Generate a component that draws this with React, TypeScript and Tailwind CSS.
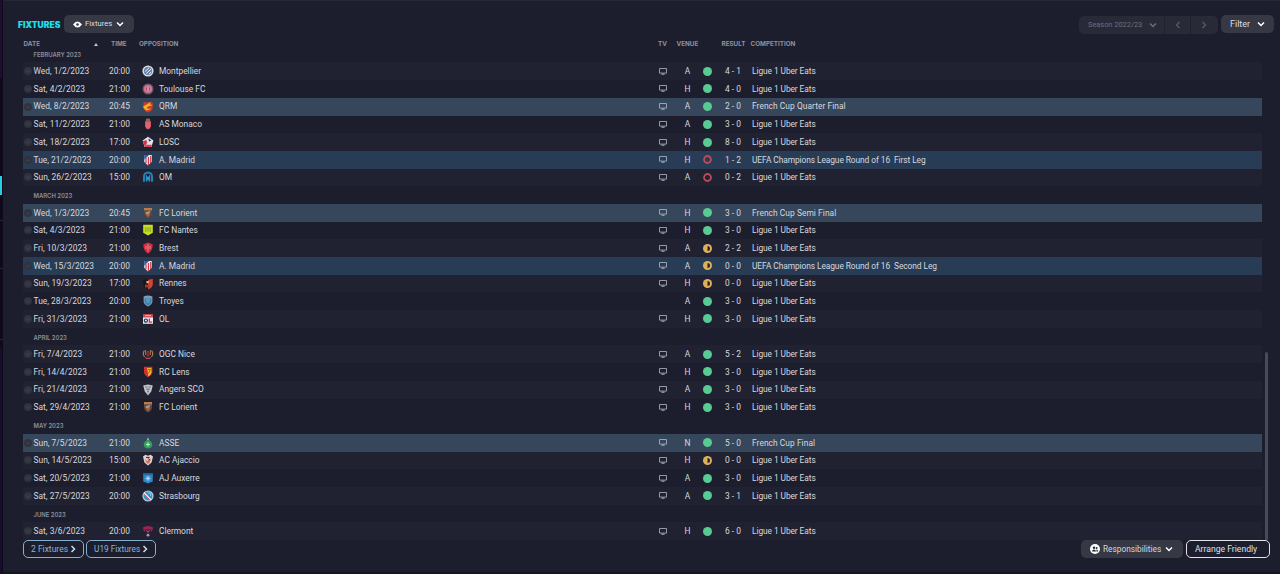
import type { ReactNode } from "react";
import clsx from "clsx";

type Outcome = "win" | "draw" | "loss";
type Kind = "league" | "cup" | "europe";

interface Fixture {
  date: string;
  time: string;
  club: string;
  tv: boolean;
  venue: "H" | "A" | "N";
  outcome: Outcome;
  result: string;
  competition: string;
  kind: Kind;
}

const LEAGUE = "Ligue 1 Uber Eats";

function fx(date: string, time: string, club: string, venue: "H" | "A" | "N", outcome: Outcome, result: string, competition = LEAGUE, kind: Kind = "league", tv = true): Fixture {
  return { date, time, club, tv, venue, outcome, result, competition, kind };
}

const rows: (string | Fixture)[] = [
  "February 2023",
  fx("Wed, 1/2/2023", "20:00", "Montpellier", "A", "win", "4 - 1"),
  fx("Sat, 4/2/2023", "21:00", "Toulouse FC", "H", "win", "4 - 0"),
  fx("Wed, 8/2/2023", "20:45", "QRM", "A", "win", "2 - 0", "French Cup Quarter Final", "cup"),
  fx("Sat, 11/2/2023", "21:00", "AS Monaco", "A", "win", "3 - 0"),
  fx("Sat, 18/2/2023", "17:00", "LOSC", "H", "win", "8 - 0"),
  fx("Tue, 21/2/2023", "20:00", "A. Madrid", "H", "loss", "1 - 2", "UEFA Champions League Round of 16  First Leg", "europe"),
  fx("Sun, 26/2/2023", "15:00", "OM", "A", "loss", "0 - 2"),
  "March 2023",
  fx("Wed, 1/3/2023", "20:45", "FC Lorient", "H", "win", "3 - 0", "French Cup Semi Final", "cup"),
  fx("Sat, 4/3/2023", "21:00", "FC Nantes", "H", "win", "3 - 0"),
  fx("Fri, 10/3/2023", "21:00", "Brest", "A", "draw", "2 - 2"),
  fx("Wed, 15/3/2023", "20:00", "A. Madrid", "A", "draw", "0 - 0", "UEFA Champions League Round of 16  Second Leg", "europe"),
  fx("Sun, 19/3/2023", "17:00", "Rennes", "H", "draw", "0 - 0"),
  fx("Tue, 28/3/2023", "20:00", "Troyes", "A", "win", "3 - 0", LEAGUE, "league", false),
  fx("Fri, 31/3/2023", "21:00", "OL", "H", "win", "3 - 0"),
  "April 2023",
  fx("Fri, 7/4/2023", "21:00", "OGC Nice", "A", "win", "5 - 2"),
  fx("Fri, 14/4/2023", "21:00", "RC Lens", "H", "win", "3 - 0"),
  fx("Fri, 21/4/2023", "21:00", "Angers SCO", "A", "win", "3 - 0"),
  fx("Sat, 29/4/2023", "21:00", "FC Lorient", "H", "win", "3 - 0"),
  "May 2023",
  fx("Sun, 7/5/2023", "21:00", "ASSE", "N", "win", "5 - 0", "French Cup Final", "cup"),
  fx("Sun, 14/5/2023", "15:00", "AC Ajaccio", "H", "draw", "0 - 0"),
  fx("Sat, 20/5/2023", "21:00", "AJ Auxerre", "A", "win", "3 - 0"),
  fx("Sat, 27/5/2023", "20:00", "Strasbourg", "A", "win", "3 - 1"),
  "June 2023",
  fx("Sat, 3/6/2023", "20:00", "Clermont", "H", "win", "6 - 0"),
];

const SHIELD = "M2 1h8v5.5Q10 9.5 6 11.5Q2 9.5 2 6.5Z";

const crests: Record<string, ReactNode> = {
  Montpellier: (
    <>
      <circle cx="6" cy="6" r="5.6" fill="#d9dce3" />
      <circle cx="6" cy="6" r="4.1" fill="#5b83b5" />
      <path d="M3 6.5l4-3.6M4.2 8.6l4.8-4.4M7 9l2.2-2" stroke="#f0e7e4" strokeWidth="1" />
      <path d="M3.6 7.6l4.6-4.2" stroke="#d8654a" strokeWidth=".9" />
    </>
  ),
  "Toulouse FC": (
    <>
      <circle cx="6" cy="6" r="5.5" fill="#6f5676" />
      <circle cx="6" cy="6" r="4.1" fill="#cf7790" />
      <circle cx="6" cy="6" r="2" fill="#b03f60" />
      <path d="M5 5h2M6 4.2v3.6M5 7h2" stroke="#f1ccd5" strokeWidth=".7" />
    </>
  ),
  QRM: (
    <>
      <path d="M1.4 1.2h9.2v6.6Q9.4 10.8 6 11.4Q2.6 10.8 1.4 7.8Z" fill="#d23c22" />
      <path d="M1 5.4L5 3.6l3.6-2.8L7.8 3.4 11.2 4 6 5.6 4.4 7.3 9.4 8 4.4 9.5 2 7.2Z" fill="#f3b32c" />
    </>
  ),
  "AS Monaco": (
    <>
      <path d="M3 3.2h6v5Q8.4 10.4 6 11.6Q3.6 10.4 3 8.2Z" fill="#d8505f" />
      <path d="M5 3.4v7M7 3.4v7" stroke="#ee8a90" strokeWidth=".7" />
      <path d="M3.7 3.2L4 1l2-.7L8 1l.3 2.2Z" fill="#8a6d4e" />
    </>
  ),
  LOSC: (
    <>
      <path d="M6 .8l5.4 3.8-2 6.4H2.6l-2-6.4Z" fill="#e6e2ea" />
      <path d="M.8 5.2L4.4 4l.8 2.6L3 11Z" fill="#d5344a" />
      <path d="M6.4 2.4L9.4 4.6 7 5.4Z" fill="#283763" />
      <path d="M3.2 8.8h6.6l-.6 2.2H3Z" fill="#d84456" />
    </>
  ),
  "A. Madrid": (
    <>
      <path d="M2.2 1h7.6v6.8L6 11.6 2.2 7.8Z" fill="#eceaf0" />
      <path d="M4 4v5M6.4 3v8M8.7 2v7" stroke="#ce3646" strokeWidth="1.1" />
      <path d="M2.2 1h4.8L2.2 5.8Z" fill="#3a5c9c" />
    </>
  ),
  OM: (
    <>
      <path d="M2 10.8V5.2Q2.3 1.6 6 1.4Q9.7 1.6 10 5.2v5.6" fill="none" stroke="#2380b6" strokeWidth="2" />
      <path d="M4.6 10.4V5.6L6 7.6l1.4-2v4.8" fill="none" stroke="#2c93ca" strokeWidth="1.5" />
    </>
  ),
  "FC Lorient": (
    <>
      <path d={SHIELD} fill="#554742" />
      <path d="M2 1h8v2.4H2Z" fill="#b77c4a" />
      <path d="M3.2 5.2l5.4-1.4L7.2 7 4.4 8Z" fill="#a3988a" />
      <path d="M4 7.6Q6 6.4 8.4 7.6L6 10.4Z" fill="#c2583b" />
    </>
  ),
  "FC Nantes": (
    <>
      <path d="M1.2.8h9.6v8L6 11.4 1.2 8.8Z" fill="#c8de22" />
      <path d="M3.4 3v5M5 8V3.4l2 4V3M8.6 3v5" fill="none" stroke="#7f9d2c" strokeWidth=".7" />
    </>
  ),
  Brest: (
    <>
      <path d="M6 .5l4.7 1.8Q10.8 9 6 11.7Q1.2 9 1.3 2.3Z" fill="#d62b3d" />
      <path d="M6 2.2v7M4 4v3M8 4v3" stroke="#f0b0b5" strokeWidth=".7" />
    </>
  ),
  Rennes: (
    <>
      <path d="M1.4 1.2L6 2v9.6Q2 9.6 1.4 7Z" fill="#17151b" />
      <path d="M6 2l4.8-1.2V7Q10 9.8 6 11.6Z" fill="#d4452f" />
      <path d="M4.4 3h2.2v2.2H4.4Z" fill="#d9b8a0" />
      <path d="M3 6.6h4.4v2.8H3Z" fill="#a63a2a" />
    </>
  ),
  Troyes: (
    <>
      <path d="M1.6 1.4Q6-.2 10.4 1.4v5.4Q9.8 9.8 6 11.6Q2.2 9.8 1.6 6.8Z" fill="#7f9db3" />
      <path d="M2.6 3.4h6.8v3.2Q9 9 6 10.4Q3 9 2.6 6.6Z" fill="#367fb8" />
      <path d="M4 5h4M4.4 7h3" stroke="#85c1e3" strokeWidth=".8" />
    </>
  ),
  OL: (
    <>
      <path d="M1 1h10v4H1Z" fill="#c3454e" />
      <path d="M1 4.4h10v6.4H1Z" fill="#e8e9ef" />
      <circle cx="3.9" cy="7.6" r="1.6" fill="none" stroke="#26355f" strokeWidth="1.2" />
      <path d="M7.4 5.4v3.8h2.8" fill="none" stroke="#c7333f" strokeWidth="1.3" />
      <path d="M3 2h6v1.2H3Z" fill="#e7a3a6" />
    </>
  ),
  "OGC Nice": (
    <>
      <path d="M2.4 2.6Q0 6 2.6 9M9.6 2.6Q12 6 9.4 9" fill="none" stroke="#a98556" strokeWidth="1.1" />
      <path d="M3.6 2v5M8.4 2v5M6 3v5.5" stroke="#b7854f" strokeWidth=".9" />
      <path d="M4.4 4h3.2v3.6H4.4Z" fill="#7c2e34" />
      <path d="M3 8.8Q6 11 9 8.8L8 11H4Z" fill="#c0464c" />
    </>
  ),
  "RC Lens": (
    <>
      <path d="M2 .8h8.4v6Q9.6 9.8 6 11.6Q2.6 9.8 2 6.8Z" fill="#d3312c" />
      <path d="M5.2 2h4.2v4.6Q8.8 8.8 6.4 10.2Z" fill="#f1c330" />
      <path d="M6 3.4h2.4L6.4 7.6" fill="none" stroke="#b2342a" strokeWidth=".8" />
    </>
  ),
  "Angers SCO": (
    <>
      <path d="M1.2 1.6L6 .5l4.8 1.1-1.6 6L6 11.6 2.8 7.6Z" fill="#c3c5cb" />
      <path d="M3 3h2M7 3h2M4 5.2h4M5 7.4h2" stroke="#5d5f69" strokeWidth=".8" />
      <path d="M6 2v8" stroke="#7d8089" strokeWidth=".6" />
    </>
  ),
  ASSE: (
    <>
      <path d="M6 .2l.8 2.4L6 4l-.8-1.4Z" fill="#b9d8c2" />
      <path d="M6 2.6Q10.6 5 10.2 8.2Q9.4 11.4 6 11.6Q2.6 11.4 1.8 8.2Q1.4 5 6 2.6Z" fill="#2ea25c" />
      <path d="M4 7.4h4M6 5.4v4" stroke="#c7efd3" strokeWidth="1" />
    </>
  ),
  "AC Ajaccio": (
    <>
      <path d="M1 2.6L3.4.8 6 1.8 8.6.8 11 2.6 9.6 8.4 6 11.6 2.4 8.4Z" fill="#e2d2cd" />
      <path d="M3 4.4L5 7l3.6-3L8 8.2 6 10 4 8.2Z" fill="#d4705f" />
      <path d="M4 3.4h3.6M6.2 4.4l1.6 1.8" stroke="#26222b" strokeWidth="1" />
    </>
  ),
  "AJ Auxerre": (
    <>
      <path d="M1.2 1h9.6v8.6L6 11.5 1.2 9.6Z" fill="#2a86c6" />
      <path d="M1.2 1h9.6v2H1.2Z" fill="#1d62a1" />
      <path d="M6 3.6v5.6M3.4 6.4h5.2M4.3 4.8l3.4 3.2M7.7 4.8L4.3 8" stroke="#cfe9f7" strokeWidth=".7" />
    </>
  ),
  Strasbourg: (
    <>
      <circle cx="6" cy="6" r="5.6" fill="#a9d2ea" />
      <circle cx="6" cy="6" r="4.4" fill="#2f94cc" />
      <path d="M1.8 3L9 10.2" stroke="#e8eef5" strokeWidth="1.8" />
      <path d="M1.4 3.6L8.4 10.6" stroke="#cf3f4d" strokeWidth="1" />
      <path d="M5.6 3h3v3" fill="none" stroke="#a5d3ec" strokeWidth=".8" />
    </>
  ),
  Clermont: (
    <>
      <path d="M.8 2.6Q6-.6 11.2 2.6L10 6.4H2Z" fill="#9c2450" />
      <path d="M2.6 4.2h6.8L8.4 8 6 10 3.6 8Z" fill="#23244c" />
      <path d="M4.2 4.6L6 7.4l1.8-2.8" fill="none" stroke="#b83f6c" strokeWidth="1" />
      <circle cx="6" cy="10.2" r="1.4" fill="#c98ba2" />
    </>
  ),
};

function Crest({ club }: { club: string }) {
  return (
    <svg viewBox="0 0 12 12" className="size-3" fill="none">
      {crests[club]}
    </svg>
  );
}

function TvIcon() {
  return (
    <svg viewBox="0 0 8 7" className="h-[7px] w-2" fill="none" stroke="#b4b8c4">
      <path d="M.5.5h7v4.6h-7Z" strokeWidth=".8" />
      <path d="M2.4 6.2h3.2" strokeWidth="1" />
    </svg>
  );
}

function OutcomeDot({ outcome }: { outcome: Outcome }) {
  return (
    <svg viewBox="0 0 9 9" className="size-[9px]" fill="none">
      {outcome === "win" && <circle cx="4.5" cy="4.5" r="4.5" fill="#57cb93" />}
      {outcome === "loss" && <circle cx="4.5" cy="4.5" r="3.5" stroke="#bc4b57" strokeWidth="1.8" />}
      {outcome === "draw" && (
        <>
          <circle cx="4.5" cy="4.5" r="4.5" fill="#deb05a" />
          <path d="M4.5 2v5a2.5 2.5 0 0 0 0-5Z" fill="#2a2430" />
        </>
      )}
    </svg>
  );
}

function Chevron({ dir, className }: { dir: "down" | "left" | "right"; className?: string }) {
  const d = { down: "M1 2.5l3 3 3-3", left: "M5.5 1l-3 3 3 3", right: "M2.5 1l3 3-3 3" }[dir];
  return (
    <svg viewBox="0 0 8 8" className={clsx("shrink-0", className)} width="8" height="8" fill="none" stroke="currentColor" strokeWidth="1.5">
      <path d={d} />
    </svg>
  );
}

function FixtureRow({ fixture, odd }: { fixture: Fixture; odd: boolean }) {
  return (
    <div
      className={clsx(
        "grid h-[17.7px] shrink-0 grid-cols-[10.5px_73px_26px_26.5px_492px_24px_24px_17px_34px_1fr] items-center text-[8.4px] leading-none whitespace-pre text-[#d6d8df]",
        fixture.kind === "cup" && "bg-[#36465b]",
        fixture.kind === "europe" && "bg-[#293c56]",
        fixture.kind === "league" && odd && "bg-[#202231]",
      )}
    >
      <svg viewBox="0 0 8 8" className="ml-px size-2" fill="none">
        <circle cx="4" cy="4" r="4" fill="#30323e" />
        <path d="M2.2 4.1l1.3 1.2 2.4-2.6" stroke="#4b4d58" strokeWidth=".8" />
      </svg>
      <span className="tracking-[0.03px]">{fixture.date}</span>
      <span className="text-center">{fixture.time}</span>
      <span className="flex justify-end pr-[5px]">
        <Crest club={fixture.club} />
      </span>
      <span>{fixture.club}</span>
      <span className="flex justify-center">{fixture.tv && <TvIcon />}</span>
      <span className="pl-px text-center">{fixture.venue}</span>
      <span className="flex justify-center">
        <OutcomeDot outcome={fixture.outcome} />
      </span>
      <span className="text-center">{fixture.result}</span>
      <span className={clsx("pl-0.5", fixture.kind === "cup" ? "tracking-[0.06px]" : "tracking-[-0.08px]")}>{fixture.competition}</span>
    </div>
  );
}

function TopBar() {
  return (
    <header className="flex h-[18px] items-center pr-1.5 pl-[15px]">
      <h1 className="w-[46px] pt-[3px] font-[Inter,sans-serif] text-[8.5px] leading-none font-black text-[#1ee0ec]">FIXTURES</h1>
      <button className="flex h-[18px] w-[70px] items-center rounded-[5px] bg-[#363844] pl-[9px] text-[#dcdde3]">
        <svg viewBox="0 0 9 7" className="h-[7px] w-[9px]">
          <path d="M0 3.5Q4.5-2.6 9 3.5Q4.5 9.6 0 3.5Z" fill="#fff" />
          <circle cx="4.5" cy="3.5" r="1.3" fill="#363844" />
        </svg>
        <span className="ml-[3px] text-[7.7px] leading-none">Fixtures</span>
        <Chevron dir="down" className="ml-1 text-white" />
      </button>
      <div className="mt-px ml-auto flex h-[18px] overflow-hidden rounded-[5px] bg-[#282a38] text-[#6d6f7b]">
        <div className="flex w-[86px] items-center border-r border-[#1f212f] pl-[9px]">
          <span className="w-[61px] text-[7.4px] leading-none">Season 2022/23</span>
          <Chevron dir="down" />
        </div>
        <div className="flex w-[26px] items-center justify-center border-r border-[#1f212f] text-[#555763]">
          <Chevron dir="left" />
        </div>
        <div className="flex w-[27px] items-center justify-center pr-0.5 text-[#555763]">
          <Chevron dir="right" />
        </div>
      </div>
      <button className="ml-[3px] flex h-[18px] w-[53px] items-center rounded-[5px] bg-[#363844] pl-[9px] text-[#dcdde3]">
        <span className="w-[27px] text-left text-[9px] leading-none">Filter</span>
        <Chevron dir="down" className="text-white" />
      </button>
    </header>
  );
}

function ColumnHeads() {
  return (
    <div className="mt-[5px] mb-0.5 ml-[20.5px] flex h-3 items-center font-[Inter,sans-serif] text-[6.3px] leading-none font-bold text-[#8f929e]">
      <span className="w-[70px]">DATE</span>
      <svg viewBox="0 0 4 3" className="h-[3px] w-1">
        <path d="M2 0l2 3H0Z" fill="#c3c5cd" />
      </svg>
      <span className="ml-[13.5px] w-[28px]">TIME</span>
      <span className="w-[519px]">OPPOSITION</span>
      <span className="w-[18.5px]">TV</span>
      <span className="w-[45px]">VENUE</span>
      <span className="w-[29px]">RESULT</span>
      <span>COMPETITION</span>
    </div>
  );
}

export default function App() {
  return (
    <div className="flex h-[574px] w-[1280px] overflow-hidden bg-[#1c1e2d] font-[Roboto,sans-serif]">
      <aside className="flex w-[3px] shrink-0 flex-col bg-[#0e0a1c]">
        <div className="h-[78px] w-0.5 bg-[#1d0d32]" />
        <div className="mt-[98px] h-[19px] w-0.5 bg-[#27cfe0]" />
        <div className="mt-[25px] h-px bg-[#282638]" />
        <div className="mt-[47px] h-px bg-[#282638]" />
        <div className="mt-[70px] h-px bg-[#282638]" />
        <div className="mt-2 w-0.5 flex-1 bg-[#1a0d2c]" />
      </aside>
      <main className="flex flex-1 flex-col border-t border-[#262837] pt-[14px]">
        <TopBar />
        <ColumnHeads />
        <div className="flex h-[488px] pl-5">
          <div className="flex w-[1239px] flex-col justify-end overflow-hidden">
            {rows.map((row, i) =>
              typeof row === "string" ? (
                <div key={row} className="flex h-[17.7px] shrink-0 items-center pt-0.5 pl-[10.5px] font-[Inter,sans-serif] text-[5.9px] leading-none font-semibold text-[#8c8f9b] uppercase">
                  {row}
                </div>
              ) : (
                <FixtureRow key={row.date} fixture={row} odd={i % 2 === 1} />
              ),
            )}
          </div>
          <div className="flex flex-col justify-end pl-[3px]">
            <div className="h-[188px] w-[3px] rounded-t-full bg-[#484a56]" />
          </div>
        </div>
        <footer className="flex h-[18px] items-center pr-2.5 pl-5 text-[8.5px] leading-none">
          <button className="flex h-[18px] w-[61px] items-center rounded-[5px] border-[1.5px] border-[#86aed0] pl-[7px] text-[#8ab4d8]">
            <span className="w-[37.5px] text-left">2 Fixtures</span>
            <Chevron dir="right" className="text-[#c5dcee]" />
          </button>
          <button className="ml-0.5 flex h-[18px] w-[70px] items-center rounded-[5px] border-[1.5px] border-[#86aed0] pl-[7px] text-[8.3px] text-[#8ab4d8]">
            <span className="w-[46.5px] text-left">U19 Fixtures</span>
            <Chevron dir="right" className="text-[#c5dcee]" />
          </button>
          <button className="ml-auto flex h-[18px] w-[102px] items-center rounded-[5px] bg-[#363844] pl-[9px] text-[8.3px] text-[#d5d6dc]">
            <svg viewBox="0 0 10 10" className="size-2.5">
              <circle cx="5" cy="5" r="5" fill="#fff" />
              <circle cx="4" cy="3.8" r="1.2" fill="#282a36" />
              <circle cx="6.6" cy="4" r="1" fill="#282a36" />
              <path d="M2 7.4Q2.2 5.4 4 5.4T6 7.4ZM6.4 7.4V5.6Q8 5.6 8.2 7.4Z" fill="#282a36" />
            </svg>
            <span className="ml-[3px] w-[62px] text-left">Responsibilities</span>
            <Chevron dir="down" className="text-white" />
          </button>
          <button className="ml-[3px] flex h-[18px] w-[84px] items-center rounded-[5px] border-[1.5px] border-[#e2e3e8] pl-2 text-[8.6px] text-[#dfe0e6]">Arrange Friendly</button>
        </footer>
        <div className="mt-auto h-0.5 bg-[#151424]" />
      </main>
    </div>
  );
}
